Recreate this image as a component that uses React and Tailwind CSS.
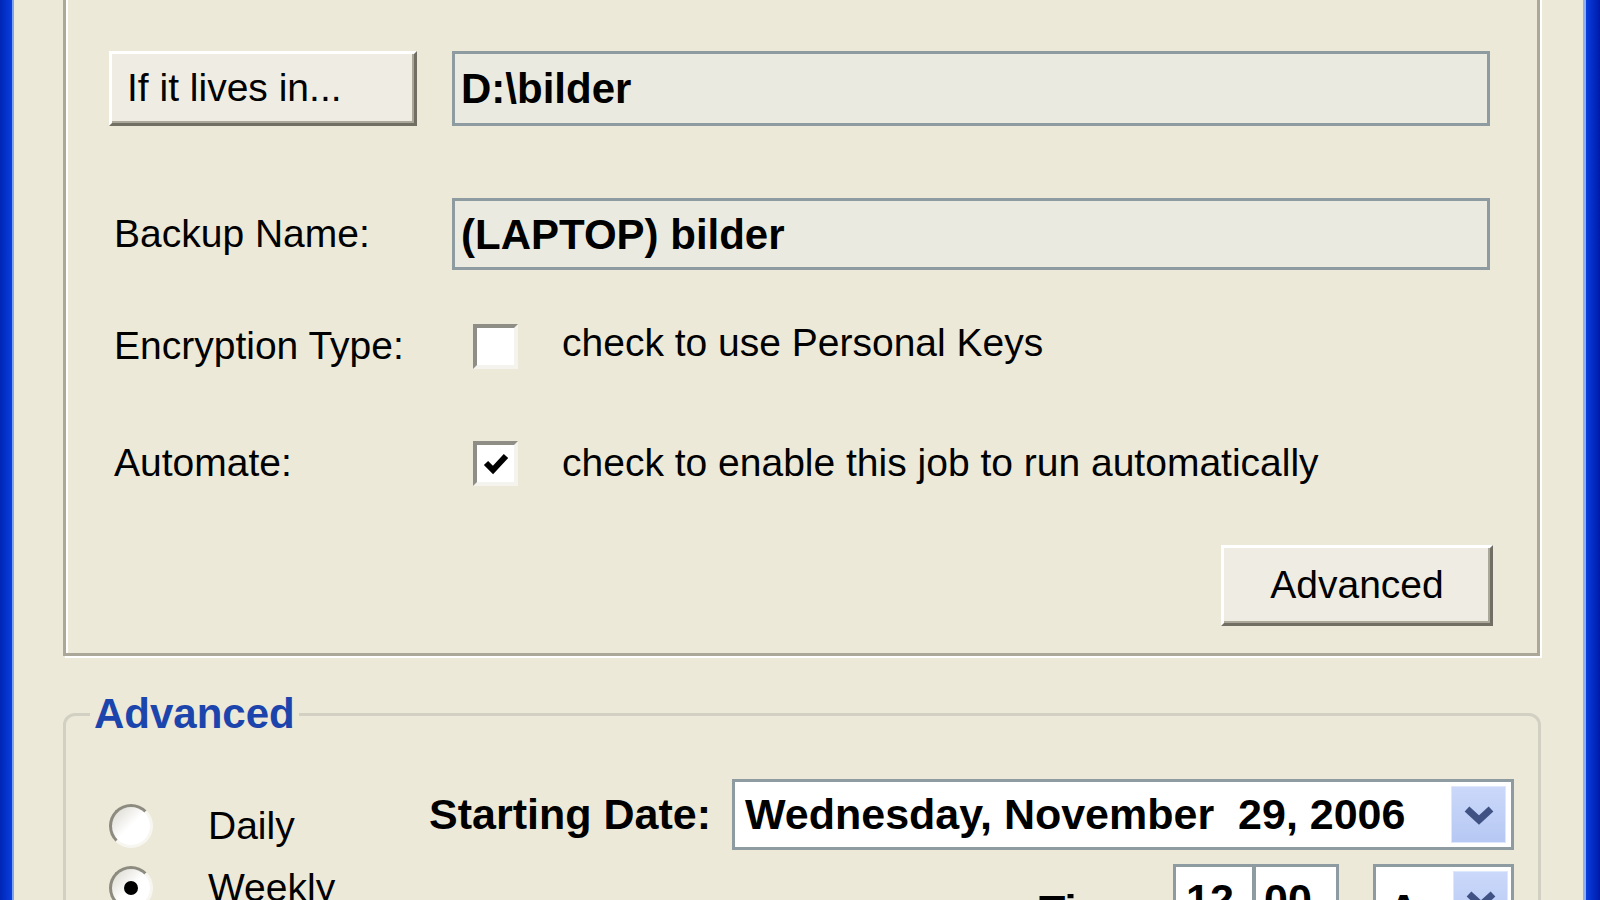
import React from "react";

const font = { fontFamily: '"Liberation Sans", Arial, sans-serif' };

function XpButton({ children, className = "" }) {
  return (
    <button
      className={
        "bg-[#efede3] border-[3px] border-t-white border-l-white border-r-[#716f64] border-b-[#716f64] shadow-[inset_-2px_-2px_0_#aca899] text-[39px] text-black " +
        className
      }
    >
      {children}
    </button>
  );
}

function Checkbox({ checked }) {
  return (
    <div className="w-[45px] h-[45px] bg-white border-[4px] border-t-[#8e8d86] border-l-[#8e8d86] border-r-[#f4f3ee] border-b-[#f4f3ee] flex items-center justify-center">
      {checked && (
        <svg width="26" height="24" viewBox="0 0 26 24">
          <path d="M3 11 L10 18 L23 4" fill="none" stroke="#000" strokeWidth="6" />
        </svg>
      )}
    </div>
  );
}

function Radio({ checked }) {
  return (
    <div className="w-[44px] h-[44px] rounded-full bg-linear-to-br from-[#d8d6cc] via-white to-white border-[3px] border-t-[#8d8b80] border-l-[#8d8b80] border-r-[#f7f6f1] border-b-[#f7f6f1] flex items-center justify-center">
      {checked && <div className="w-[14px] h-[14px] rounded-full bg-black" />}
    </div>
  );
}

function DropArrow() {
  return (
    <div className="w-[55px] h-[57px] bg-linear-to-b from-[#cbd8fa] to-[#b6c8f3] border border-[#dfe7fb] flex items-center justify-center">
      <svg width="32" height="22" viewBox="0 0 32 22">
        <path d="M4 5 L16 16 L28 5" fill="none" stroke="#3f5283" strokeWidth="7" />
      </svg>
    </div>
  );
}

export default function App() {
  return (
    <div className="flex w-[1600px] h-[900px] overflow-hidden bg-[#ece9d8]" style={font}>
      {/* marco izquierdo */}
      <div className="w-[12px] bg-linear-to-r from-[#0026b4] to-[#0b3ee0]" />
      <div className="w-[2px] bg-[#7ea4f5]" />

      <div className="flex-1 flex flex-col">
        {/* primer grupo */}
        <div className="ml-[49px] w-[1477px] mt-[-30px] border-[3px] border-[#aca899] shadow-[2px_2px_0_#fff,inset_2px_2px_0_#fff] pt-[78px] pl-[43px] pb-[27px]">
          <div className="flex h-[75px]">
            <XpButton className="w-[308px] text-left pl-[15px]">If it lives in...</XpButton>
            <div className="ml-[35px] w-[1038px] border-[3px] border-[#8e9ca1] bg-[#ebeae1] flex items-center pl-[6px] text-[42px] font-bold text-black">
              D:\bilder
            </div>
          </div>

          <div className="flex h-[72px] mt-[72px] items-center">
            <div className="w-[343px] pl-[5px] text-[39px]">Backup Name:</div>
            <div className="w-[1038px] h-full border-[3px] border-[#8e9ca1] bg-[#ebeae1] flex items-center pl-[6px] text-[42px] font-bold">
              (LAPTOP) bilder
            </div>
          </div>

          <div className="flex h-[45px] mt-[54px] items-center">
            <div className="w-[364px] pl-[5px] text-[39px]">Encryption Type:</div>
            <Checkbox />
            <div className="ml-[44px] text-[39px] -mt-[6px]">check to use Personal Keys</div>
          </div>

          <div className="flex h-[45px] mt-[72px] items-center">
            <div className="w-[364px] pl-[5px] text-[39px]">Automate:</div>
            <Checkbox checked />
            <div className="ml-[44px] text-[39px]">check to enable this job to run automatically</div>
          </div>

          <div className="flex justify-end mt-[59px] pr-[44px]">
            <XpButton className="w-[272px] h-[81px]">Advanced</XpButton>
          </div>
        </div>

        {/* segundo grupo */}
        <fieldset className="ml-[49px] w-[1478px] mt-[34px] border-[3px] border-[#d2d0c2] rounded-[12px] p-0 h-[300px] shrink-0">
          <legend className="ml-[24px] px-[4px] text-[42px] font-bold leading-[48px] text-[#1b45ad]">
            Advanced
          </legend>
          <div className="flex pl-[43px] pr-[24px] pt-[41px]">
            <div className="w-[300px] flex flex-col gap-[18px] pt-[25px]">
              <div className="flex items-center h-[44px]">
                <Radio />
                <span className="ml-[55px] text-[39px]">Daily</span>
              </div>
              <div className="flex items-center h-[44px]">
                <Radio checked />
                <span className="ml-[55px] text-[39px]">Weekly</span>
              </div>
            </div>

            <div className="flex-1 flex flex-col items-end">
              <div className="flex items-center">
                <span className="text-[43px] font-bold mr-[21px]">Starting Date:</span>
                <div className="w-[782px] h-[71px] border-[3px] border-[#8e9ca1] bg-white flex items-center justify-between pl-[10px] pr-[5px]">
                  <span className="text-[43px] font-bold whitespace-pre">Wednesday, November  29, 2006</span>
                  <DropArrow />
                </div>
              </div>

              <div className="flex items-start mt-[14px]">
                <span className="text-[43px] font-bold mr-[20px] mt-[14px]">Time:</span>
                <div className="flex h-[71px] border-[3px] border-[#8e9ca1] bg-white">
                  <div className="w-[80px] text-[43px] font-bold pl-[10px] flex items-center border-r-[4px] border-[#8e9ca1]">12</div>
                  <div className="w-[80px] text-[43px] font-bold pl-[8px] flex items-center">00</div>
                </div>
                <div className="ml-[34px] w-[141px] h-[71px] border-[3px] border-[#8e9ca1] bg-white flex items-start justify-between pl-[12px] pr-[3px] pt-[4px]">
                  <span className="text-[43px] font-bold mt-[6px]">A</span>
                  <DropArrow />
                </div>
              </div>
            </div>
          </div>
        </fieldset>
      </div>

      {/* marco derecho */}
      <div className="w-[3px] bg-[#8fb0f5]" />
      <div className="w-[14px] bg-linear-to-r from-[#0b3ee0] to-[#0019a8]" />
    </div>
  );
}
